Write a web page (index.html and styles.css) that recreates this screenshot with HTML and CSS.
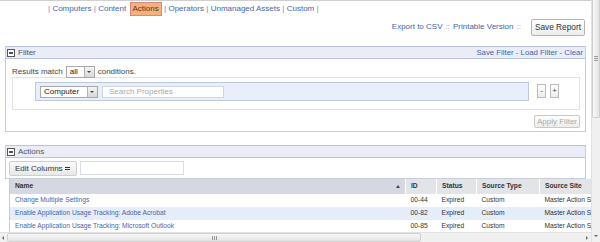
FILE: index.html
```html
<!DOCTYPE html>
<html lang="en">
<head>
    <meta charset="UTF-8">
    <title>Actions</title>
    <link rel="stylesheet" href="styles.css">
</head>
<body>
    <div class="window">
        <div class="main">
            <div class="viewport">
                <nav class="tabs">
                    <span class="sep">|</span><a href="#">Computers</a>
                    <span class="sep">|</span><a href="#">Content</a>
                    <a href="#" class="active">Actions</a><span class="sep">|</span>
                    <a href="#">Operators</a>
                    <span class="sep">|</span><a href="#">Unmanaged Assets</a>
                    <span class="sep">|</span><a href="#">Custom</a>
                    <span class="sep">|</span>
                </nav>

                <div class="tools">
                    <a href="#">Export to CSV</a><span class="dots">::</span>
                    <a href="#">Printable Version</a><span class="dots">::</span>
                    <button class="btn save">Save Report</button>
                </div>

                <section class="panel filter">
                    <div class="panel-head">
                        <span class="toggle"></span>
                        <span class="title">Filter</span>
                        <span class="head-links"><a href="#">Save Filter</a> - <a href="#">Load Filter</a> - <a href="#">Clear</a></span>
                    </div>
                    <div class="panel-body">
                        <div class="match">
                            Results match
                            <span class="select small"><span class="value">all</span><span class="arrow"></span></span>
                            conditions.
                        </div>
                        <div class="conditions">
                            <div class="cond-row">
                                <span class="select"><span class="value">Computer</span><span class="arrow"></span></span>
                                <span class="search">Search Properties</span>
                            </div>
                            <span class="mini">-</span>
                            <span class="mini">+</span>
                        </div>
                        <div class="apply-row">
                            <button class="btn apply">Apply Filter</button>
                        </div>
                    </div>
                </section>

                <section class="panel actions">
                    <div class="panel-head">
                        <span class="toggle"></span>
                        <span class="title">Actions</span>
                    </div>
                    <div class="panel-body">
                        <button class="btn columns">Edit Columns <span class="caret"></span></button>
                        <span class="quick"></span>
                    </div>
                </section>

                <table class="grid">
                    <thead>
                        <tr>
                            <th class="c-name sorted">Name <span class="sort"></span></th>
                            <th class="c-id">ID</th>
                            <th class="c-status">Status</th>
                            <th class="c-type">Source Type</th>
                            <th class="c-site">Source Site</th>
                        </tr>
                    </thead>
                    <tbody>
                        <tr>
                            <td class="c-name"><a href="#">Change Multiple Settings</a></td>
                            <td>00-44</td>
                            <td>Expired</td>
                            <td>Custom</td>
                            <td>Master Action Site</td>
                        </tr>
                        <tr class="alt">
                            <td class="c-name"><a href="#">Enable Application Usage Tracking: Adobe Acrobat</a></td>
                            <td>00-82</td>
                            <td>Expired</td>
                            <td>Custom</td>
                            <td>Master Action Site</td>
                        </tr>
                        <tr>
                            <td class="c-name"><a href="#">Enable Application Usage Tracking: Microsoft Outlook</a></td>
                            <td>00-85</td>
                            <td>Expired</td>
                            <td>Custom</td>
                            <td>Master Action Site</td>
                        </tr>
                    </tbody>
                </table>
            </div>
            <div class="hscroll">
                <span class="arr left"></span>
                <span class="thumb"><span class="grip"></span></span>
                <span class="track"></span>
                <span class="arr right"></span>
            </div>
        </div>
        <div class="vscroll">
            <span class="thumb"><span class="grip"></span></span>
            <span class="track"></span>
            <span class="arr down"></span>
        </div>
    </div>
</body>
</html>
```

FILE: styles.css
```css
* {
    box-sizing: border-box;
}
body {
    margin: 0;
    font-family: "Liberation Sans", Arial, sans-serif;
    font-size: 8px;
    line-height: 1.2;
    color: #444;
    background: #fff;
}
a {
    color: #4565a8;
    text-decoration: none;
}
.window {
    display: flex;
    height: 242px;
    overflow: hidden;
}
.main {
    flex: 1;
    display: flex;
    flex-direction: column;
    min-width: 0;
    border-top: 1px solid #cfcfcf;
}
.viewport {
    flex: 1;
    overflow: hidden;
}

/* top navigation */
.tabs {
    display: flex;
    align-items: center;
    gap: 2.3px;
    height: 16px;
    padding-left: 48px;
}
.tabs .sep {
    color: #7088b8;
}
.tabs .active {
    background: #f5b07c;
    border: 1px solid #d48a80;
    color: #4a3a2e;
    padding: 1px 2px;
    margin-left: 1px;
}

.tools {
    display: flex;
    justify-content: flex-end;
    align-items: center;
    height: 20px;
    padding-right: 6px;
}
.tools .dots {
    color: #9aa6c0;
    margin: 0 3px;
}
.btn {
    font-family: "Liberation Sans", Arial, sans-serif;
    font-size: 8px;
    color: #333;
    background: linear-gradient(#ffffff, #ececec);
    border: 1px solid #b4b4b4;
    border-radius: 2px;
    padding: 0 3px;
    margin: 0;
    white-space: nowrap;
    cursor: pointer;
}
.btn.save {
    height: 17px;
    margin-left: 7px;
    font-size: 8.3px;
}

/* panels */
.panel {
    margin: 0 5px;
    border: 1px solid #c8ced9;
    border-top: none;
}
.panel-head {
    display: flex;
    align-items: center;
    height: 13px;
    background: #eaedf7;
    border-top: 1px solid #bcc5d8;
    border-bottom: 1px solid #bcc5d8;
    padding: 0 2px 0 1px;
    color: #555;
}
.toggle {
    position: relative;
    width: 8px;
    height: 8px;
    border: 1px solid #555;
    background: #fff;
    margin-right: 3px;
}
.toggle::after {
    content: "";
    position: absolute;
    left: 1px;
    top: 2px;
    width: 4px;
    height: 2px;
    background: #555;
}
.head-links {
    margin-left: auto;
    color: #4565a8;
    font-size: 7.8px;
}
.filter {
    margin-top: 9px;
}
.filter .panel-body {
    height: 72px;
    padding: 7px 5px 0 6px;
}
.match {
    display: flex;
    align-items: center;
    gap: 3px;
    height: 11px;
}
.select {
    display: inline-flex;
    align-items: center;
    height: 12px;
    border: 1px solid #a8a8a8;
    background: #fff;
    color: #222;
}
.select .value {
    padding: 0 3px;
    width: 46px;
}
.select.small .value {
    width: 17px;
}
.select .arrow {
    position: relative;
    width: 10px;
    height: 10px;
    background: linear-gradient(#f4f4f4, #d8d8d8);
    border-left: 1px solid #b4b4b4;
}
.select .arrow::after {
    content: "";
    position: absolute;
    left: 2px;
    top: 4px;
    border: 2px solid transparent;
    border-top: 2px solid #444;
}
.conditions {
    display: flex;
    align-items: flex-start;
    height: 33px;
    border: 1px solid #dde2eb;
    padding: 4px 0 0 22px;
}
.cond-row {
    display: flex;
    align-items: center;
    gap: 4px;
    width: 494px;
    height: 19px;
    padding-left: 4px;
    background: #e7effb;
    border: 1px solid #bcc8dc;
    margin-right: 8px;
}
.search {
    display: inline-flex;
    align-items: center;
    width: 122px;
    height: 12px;
    padding-left: 6px;
    border: 1px solid #d0d6e0;
    background: #fff;
    color: #a8a8a8;
}
.mini {
    display: inline-flex;
    justify-content: center;
    align-items: center;
    width: 9px;
    height: 14px;
    margin-top: 2px;
    border: 1px solid #bcbcbc;
    background: linear-gradient(#ffffff, #ececec);
    margin-right: 4px;
    color: #444;
}
.apply-row {
    display: flex;
    justify-content: flex-end;
    margin-top: 5px;
}
.btn.apply {
    height: 13px;
    color: #aaa;
    border-color: #c8c8c8;
    padding: 0 2px;
}

.actions {
    margin-top: 13px;
}
.actions .panel-body {
    display: flex;
    align-items: center;
    gap: 3px;
    height: 20px;
    padding-left: 3px;
}
.btn.columns {
    height: 15px;
    width: 68px;
    text-align: left;
    padding: 0 5px;
    background: linear-gradient(#fafafa, #e8e8e8);
    border-color: #cfcfcf;
}
.caret {
    display: inline-block;
    width: 5px;
    height: 3px;
    border-top: 1px solid #333;
    border-bottom: 1px solid #333;
    vertical-align: middle;
}
.quick {
    width: 104px;
    height: 14px;
    border: 1px solid #d8dde6;
    background: #fff;
}

/* table */
.grid {
    border-collapse: collapse;
    margin-left: 9px;
    table-layout: fixed;
    width: 610px;
    font-size: 6.7px;
    color: #333;
    border-left: 1px solid #c8ccd4;
}
.grid th {
    height: 15px;
    text-align: left;
    font-weight: bold;
    color: #333;
    background: #e3e4e8;
    border-right: 1px solid #fff;
    padding: 0 5px;
    white-space: nowrap;
}
.grid th.sorted {
    background: #d5d8e0;
    position: relative;
}
.sort {
    position: absolute;
    right: 5px;
    top: 6px;
    border: 2px solid transparent;
    border-bottom: 3px solid #444;
    border-top: none;
}
.grid td {
    height: 13px;
    padding: 0 5px;
    white-space: nowrap;
    overflow: hidden;
}
.grid tr.alt td {
    background: #e5edf9;
}
.c-name { width: 396px; }
.c-id { width: 31px; }
.c-status { width: 40px; }
.c-type { width: 63px; }
.c-site { width: 80px; }

/* scrollbars */
.hscroll {
    display: flex;
    align-items: center;
    height: 10px;
    background: #f0f0f0;
    border-top: 1px solid #e2e2e2;
}
.hscroll .thumb {
    display: flex;
    justify-content: center;
    align-items: center;
    width: 414px;
    height: 9px;
    margin-left: 3px;
    background: linear-gradient(#f8f8f8, #e4e4e4);
    border: 1px solid #cfcfcf;
    border-radius: 2px;
}
.hscroll .grip {
    width: 5px;
    height: 4px;
    border-left: 1px solid #999;
    border-right: 1px solid #999;
    background: linear-gradient(90deg, transparent 1px, #999 1px, #999 2px, transparent 2px);
}
.hscroll .track {
    flex: 1;
}
.arr {
    display: block;
    border: 2px solid transparent;
}
.arr.left {
    margin-left: 2px;
    border-right: 2px solid #666;
    border-left: none;
}
.arr.right {
    margin-right: 3px;
    border-left: 2px solid #666;
    border-right: none;
}
.vscroll {
    display: flex;
    flex-direction: column;
    align-items: center;
    width: 9px;
    background: #f0f0f0;
    border-left: 1px solid #e2e2e2;
}
.vscroll .thumb {
    display: flex;
    justify-content: center;
    align-items: center;
    width: 8px;
    height: 118px;
    background: linear-gradient(90deg, #f8f8f8, #e4e4e4);
    border: 1px solid #cfcfcf;
    border-top: none;
    border-radius: 0 0 2px 2px;
}
.vscroll .grip {
    width: 4px;
    height: 5px;
    border-top: 1px solid #999;
    border-bottom: 1px solid #999;
    background: linear-gradient(transparent 1px, #999 1px, #999 2px, transparent 2px);
}
.vscroll .track {
    flex: 1;
}
.arr.down {
    margin-bottom: 5px;
    border-top: 2px solid #666;
    border-bottom: none;
}
```
